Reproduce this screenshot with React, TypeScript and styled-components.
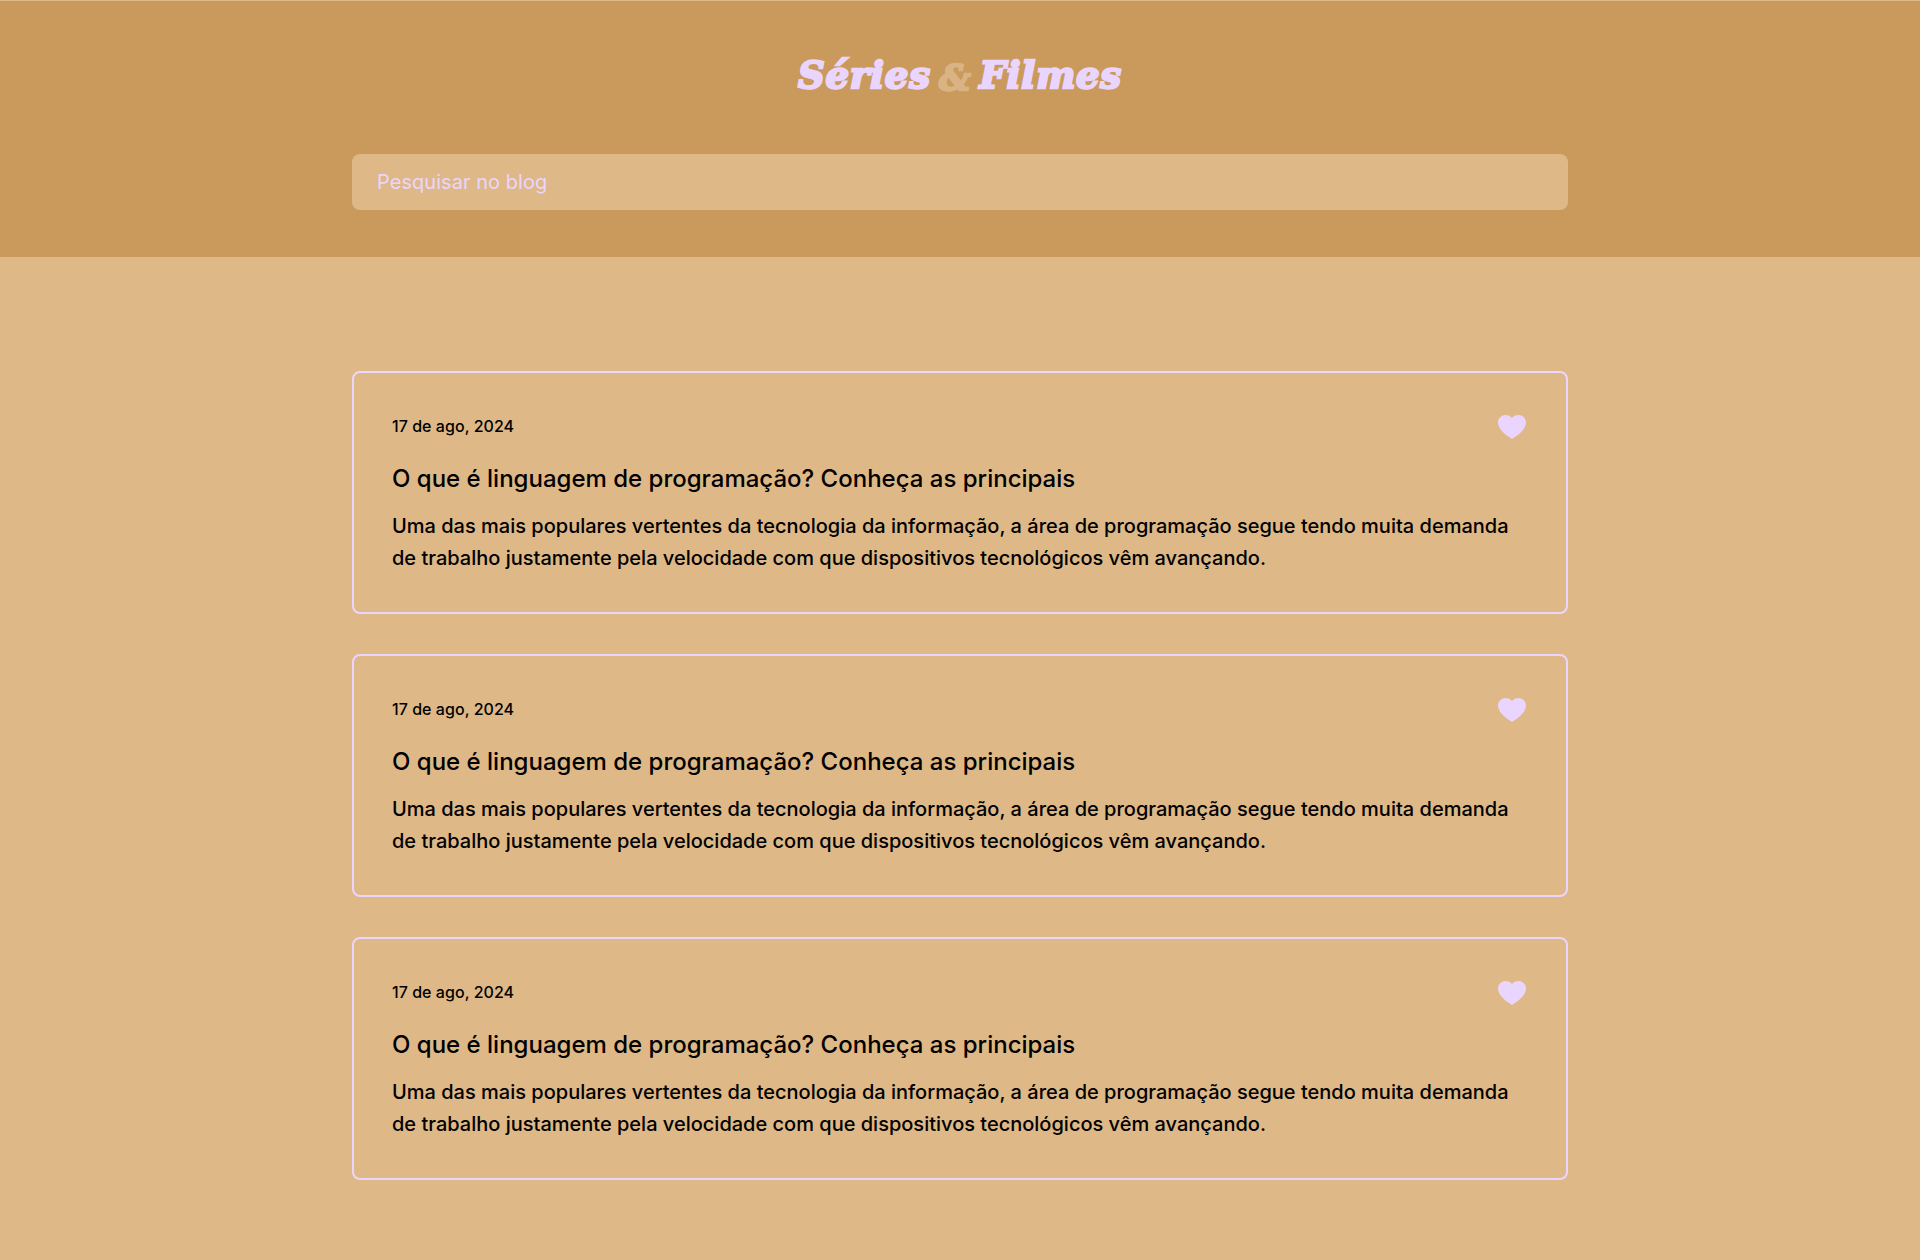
import React from "react";
import styled, { createGlobalStyle } from "styled-components";

const GlobalStyle = createGlobalStyle`
  * { box-sizing: border-box; margin: 0; padding: 0; }
  body { background: #deb887; color: #000; font-family: Inter, sans-serif; }
`;

const Header = styled.header`
  margin-top: 1px;
  height: 256px;
  padding-top: 44px;
  background: #c99a5b;
  display: flex;
  flex-direction: column;
  align-items: center;
`;

const Logo = styled.h1`
  height: 60px;
  line-height: 60px;
  font-family: "DejaVu Serif", serif;
  font-size: 37px;
  font-weight: 700;
  font-style: italic;
  color: #ead5ff;
  -webkit-text-stroke: 2.4px currentColor;
  white-space: nowrap;
  letter-spacing: 0.75px;
  word-spacing: -5.4px;
`;

const Ampersand = styled.span`
  font-size: 35px;
  line-height: 1;
  vertical-align: -2px;
  color: #d9b383;
`;

const Search = styled.input`
  margin-top: 49px;
  width: 1216px;
  height: 56px;
  padding: 0 25px;
  border: 0;
  border-radius: 8px;
  background: #deb887;
  font: 400 20px Inter, sans-serif;
  letter-spacing: 0.05px;
  outline: none;
  &::placeholder { color: #ead5ff; opacity: 1; }
`;

const Posts = styled.main`
  width: 1216px;
  margin: 0 auto;
  padding: 114px 0 80px;
  display: flex;
  flex-direction: column;
  gap: 40px;
`;

const Card = styled.article`
  height: 243px;
  padding: 38px;
  border: 2px solid #ead5ff;
  border-radius: 8px;
`;

const CardTop = styled.div`
  height: 32px;
  display: flex;
  align-items: center;
  justify-content: space-between;
`;

const PostDate = styled.time`
  padding-bottom: 2px;
  font-size: 16px;
  font-weight: 500;
  letter-spacing: 0.04px;
`;

const Title = styled.h2`
  margin-top: 20px;
  line-height: 32px;
  font-size: 24px;
  font-weight: 500;
`;

const Summary = styled.p`
  margin-top: 15px;
  line-height: 32px;
  font-size: 20px;
  font-weight: 500;
`;

const Heart = () => (
  <svg width="32" height="32" viewBox="0 0 32 32" fill="#ead5ff" aria-hidden="true">
    <path d="M16 28C8 23.2 2 17.4 2 11.6C2 7.3 5.4 4 9.6 4C12.2 4 14.5 5.1 16 7C17.5 5.1 19.8 4 22.4 4C26.6 4 30 7.3 30 11.6C30 17.4 24 23.2 16 28Z" />
  </svg>
);

const posts = [1, 2, 3].map((id) => ({
  id,
  date: "17 de ago, 2024",
  title: "O que é linguagem de programação? Conheça as principais",
  summary:
    "Uma das mais populares vertentes da tecnologia da informação, a área de programação segue tendo muita demanda de trabalho justamente pela velocidade com que dispositivos tecnológicos vêm avançando.",
}));

export default function App() {
  return (
    <>
      <GlobalStyle />
      <Header>
        <Logo>
          Séries <Ampersand>&amp;</Ampersand> Filmes
        </Logo>
        <Search placeholder="Pesquisar no blog" />
      </Header>
      <Posts>
        {posts.map((post) => (
          <Card key={post.id}>
            <CardTop>
              <PostDate>{post.date}</PostDate>
              <Heart />
            </CardTop>
            <Title>{post.title}</Title>
            <Summary>{post.summary}</Summary>
          </Card>
        ))}
      </Posts>
    </>
  );
}
